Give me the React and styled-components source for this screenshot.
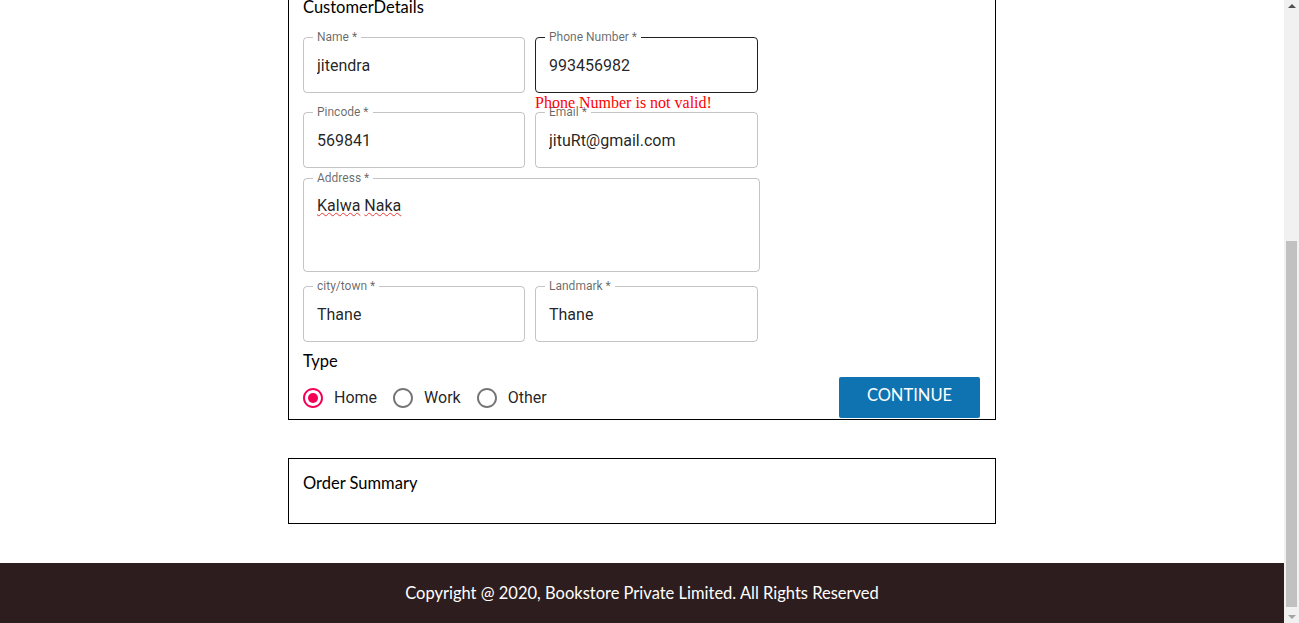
import React from "react";
import styled, { createGlobalStyle } from "styled-components";

const GlobalStyle = createGlobalStyle`
  body {
    margin: 0;
    background: #fff;
    font-family: Lato, "Noto Sans", sans-serif;
    overflow: hidden;
  }
  * {
    box-sizing: border-box;
  }
`;

const Field = ({ label, value, active }) => {
  return (
    <Fieldset $active={active}>
      <Legend>{label} *</Legend>
      <Input defaultValue={value} spellCheck={false} />
    </Fieldset>
  );
};

const RadioOption = ({ label, checked }) => {
  return (
    <RadioLabel>
      <RadioIcon $checked={checked}>
        <svg viewBox="0 0 24 24" width="24" height="24">
          <path
            fill="currentColor"
            d="M12 2C6.48 2 2 6.48 2 12s4.48 10 10 10 10-4.48 10-10S17.52 2 12 2zm0 18c-4.42 0-8-3.58-8-8s3.58-8 8-8 8 3.58 8 8-3.58 8-8 8z"
          />
          {checked && <circle cx="12" cy="12" r="5" fill="currentColor" />}
        </svg>
      </RadioIcon>
      <RadioText>{label}</RadioText>
    </RadioLabel>
  );
};

const App = () => {
  return (
    <Shell>
      <GlobalStyle />
      <Page>
        <CustomerBox>
          <BoxTitle>CustomerDetails</BoxTitle>
          <FieldRow $top={14}>
            <Field label="Name" value="jitendra" />
            <PhoneHold>
              <Field label="Phone Number" value="993456982" active />
              <ErrorText>Phone Number is not valid!</ErrorText>
            </PhoneHold>
          </FieldRow>
          <FieldRow $top={13}>
            <Field label="Pincode" value="569841" />
            <Field label="Email" value="jituRt@gmail.com" />
          </FieldRow>
          <AddressSet>
            <Legend>Address *</Legend>
            <AddressText>
              <Misspelt>Kalwa</Misspelt> <Misspelt>Naka</Misspelt>
            </AddressText>
          </AddressSet>
          <FieldRow $top={8}>
            <Field label="city/town" value="Thane" />
            <Field label="Landmark" value="Thane" />
          </FieldRow>
          <TypeTitle>Type</TypeTitle>
          <ActionRow>
            <RadioGroup>
              <RadioOption label="Home" checked />
              <RadioOption label="Work" />
              <RadioOption label="Other" />
            </RadioGroup>
            <ContinueButton>Continue</ContinueButton>
          </ActionRow>
        </CustomerBox>
        <OrderBox>
          <BoxTitle>Order Summary</BoxTitle>
        </OrderBox>
        <Footer>Copyright @ 2020, Bookstore Private Limited. All Rights Reserved</Footer>
      </Page>
      <ScrollBar>
        <ArrowBox>
          <Arrow $up />
        </ArrowBox>
        <Track>
          <Thumb />
        </Track>
        <ArrowBox>
          <Arrow />
        </ArrowBox>
      </ScrollBar>
    </Shell>
  );
};

export default App;

const Shell = styled.div`
  display: flex;
  height: 623px;
  overflow: hidden;
`;

const Page = styled.div`
  flex: 1;
  display: flex;
  flex-direction: column;
  align-items: center;
`;

const CustomerBox = styled.div`
  width: 708px;
  margin-top: -16px;
  padding: 12px 14px 1px;
  border: 1px solid #000;
  display: flex;
  flex-direction: column;
`;

const BoxTitle = styled.div`
  font-size: 16.5px;
  line-height: 20px;
  color: #000;
`;

const FieldRow = styled.div`
  display: grid;
  grid-template-columns: 222px 223px;
  column-gap: 10px;
  margin-top: ${(props) => props.$top}px;
`;

const PhoneHold = styled.div`
  position: relative;
`;

const ErrorText = styled.div`
  position: absolute;
  top: 100%;
  left: 0;
  margin-top: 1px;
  font-family: "Liberation Serif", serif;
  font-size: 16px;
  color: #ff0000;
  white-space: nowrap;
`;

const Fieldset = styled.fieldset`
  margin: 0;
  padding: 0 13px;
  min-width: 0;
  border: 1px solid
    ${(props) => (props.$active ? "rgba(0, 0, 0, 0.87)" : "rgba(0, 0, 0, 0.23)")};
  border-radius: 4px;
`;

const Legend = styled.legend`
  margin-left: -4px;
  padding: 0 4px;
  font-family: Roboto, sans-serif;
  font-size: 12px;
  line-height: 12px;
  color: rgba(0, 0, 0, 0.6);
`;

const Input = styled.input`
  display: block;
  width: 100%;
  height: 49px;
  padding: 0 0 5px;
  border: none;
  outline: none;
  background: transparent;
  font-family: Roboto, sans-serif;
  font-size: 16px;
  color: rgba(0, 0, 0, 0.87);
`;

const AddressSet = styled(Fieldset)`
  width: 457px;
  margin-top: 4px;
`;

const AddressText = styled.div`
  height: 87px;
  padding-top: 12px;
  font-family: Roboto, sans-serif;
  font-size: 16px;
  line-height: 19px;
  color: rgba(0, 0, 0, 0.87);
`;

const Misspelt = styled.span`
  text-decoration: underline wavy #e53935;
  text-decoration-thickness: 1px;
  text-underline-offset: 1px;
`;

const TypeTitle = styled(BoxTitle)`
  margin-top: 9px;
`;

const ActionRow = styled.div`
  display: flex;
  align-items: center;
  justify-content: space-between;
  height: 41px;
  margin-top: 6px;
`;

const RadioGroup = styled.div`
  display: flex;
  align-items: center;
`;

const RadioLabel = styled.label`
  display: flex;
  align-items: center;
  margin-left: -11px;
  margin-right: 16px;
  cursor: pointer;
`;

const RadioIcon = styled.span`
  display: flex;
  padding: 9px;
  color: ${(props) => (props.$checked ? "#f50057" : "rgba(0, 0, 0, 0.54)")};
`;

const RadioText = styled.span`
  font-family: Roboto, sans-serif;
  font-size: 16px;
  color: rgba(0, 0, 0, 0.87);
`;

const ContinueButton = styled.button`
  width: 141px;
  height: 41px;
  margin-right: 1px;
  padding: 0 0 5px;
  border: none;
  border-radius: 2px;
  background: #0f73b1;
  color: #fff;
  font-family: Lato, sans-serif;
  font-size: 16.5px;
  text-transform: uppercase;
  cursor: pointer;
`;

const OrderBox = styled.div`
  width: 708px;
  margin-top: 38px;
  padding: 14px 14px 30px;
  border: 1px solid #000;
`;

const Footer = styled.footer`
  align-self: stretch;
  height: 60px;
  margin-top: 39px;
  display: flex;
  align-items: center;
  justify-content: center;
  background: #2e1d1e;
  color: #fff;
  font-size: 16.5px;
`;

const ScrollBar = styled.div`
  width: 15px;
  flex-shrink: 0;
  display: flex;
  flex-direction: column;
  background: #f1f1f1;
`;

const ArrowBox = styled.div`
  height: 17px;
  display: flex;
  align-items: center;
  justify-content: center;
`;

const Arrow = styled.span`
  width: 0;
  height: 0;
  border-left: 4px solid transparent;
  border-right: 4px solid transparent;
  ${(props) =>
    props.$up
      ? "border-bottom: 4px solid #505050; margin-top: -4px;"
      : "border-top: 4px solid #a3a3a3; margin-top: 4px;"}
`;

const Track = styled.div`
  flex: 1;
  display: flex;
  flex-direction: column;
  padding: 0 2px;
`;

const Thumb = styled.div`
  height: 366px;
  margin-top: 224px;
  background: #c1c1c1;
`;
